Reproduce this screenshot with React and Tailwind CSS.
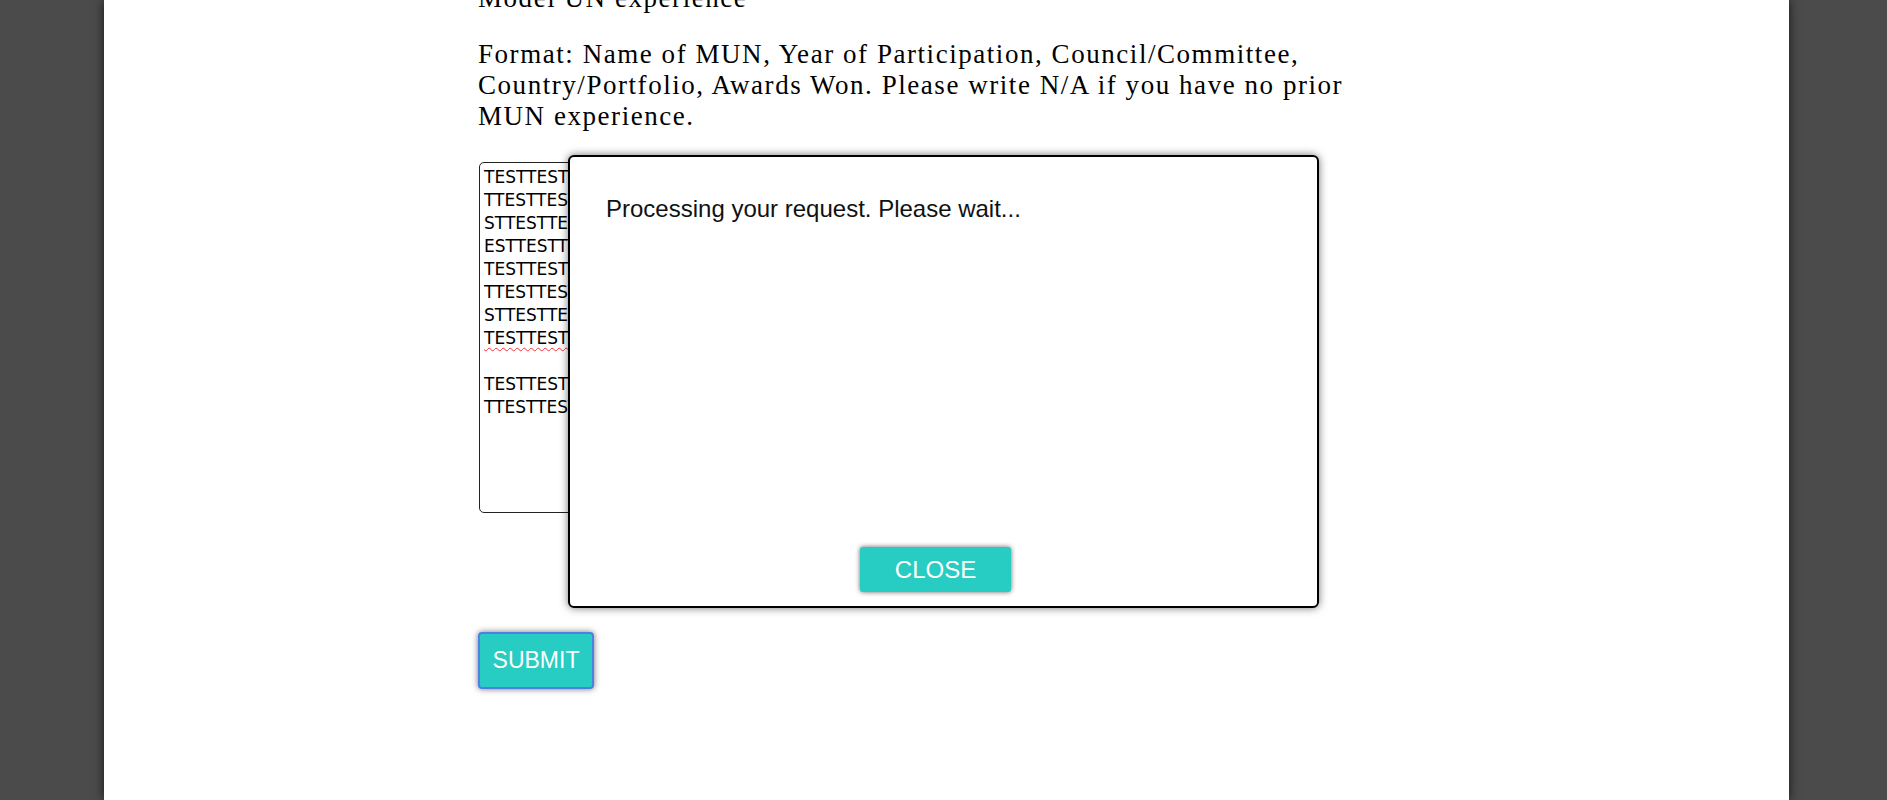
import React from 'react';

const serif = { fontFamily: '"Liberation Serif", "Times New Roman", serif' };
const sans = { fontFamily: '"Liberation Sans", Arial, sans-serif' };
const textareaFont = { fontFamily: '"DejaVu Sans", Verdana, sans-serif' };

const entryLines = [
    'TESTTESTTESTTESTTESTTESTTESTTESTTESTTEST',
    'TTESTTESTTESTTESTTESTTESTTESTTESTTESTTES',
    'STTESTTESTTESTTESTTESTTESTTESTTESTTESTTE',
    'ESTTESTTESTTESTTESTTESTTESTTESTTESTTESTT',
    'TESTTESTTESTTESTTESTTESTTESTTESTTESTTEST',
    'TTESTTESTTESTTESTTESTTESTTESTTESTTESTTES',
    'STTESTTESTTESTTESTTESTTESTTESTTESTTESTTE',
    'TESTTEST',
    '',
    'TESTTESTTESTTESTTESTTESTTESTTESTTESTTEST',
    'TTESTTESTTESTTESTTESTTESTTESTTESTTESTTES'
];

function ProcessingModal() {
    return (
        <div className="absolute left-[464px] top-[155px] w-[751px] h-[453px] bg-white border-2 border-black rounded-[6px] shadow-[0_0_8px_rgba(0,0,0,0.55)] flex flex-col">
            <p className="pl-[36px] pt-[38px] text-[24px] leading-[28px] text-[#111]" style={sans}>
                Processing your request. Please wait...
            </p>
            <div className="mt-auto mb-[14px] flex justify-center pr-[16px]">
                <button
                    className="w-[151px] h-[45px] bg-[#27ccc2] text-white text-[24px] rounded-[3px] shadow-[0_0_5px_rgba(0,0,0,0.6)]"
                    style={sans}
                >
                    CLOSE
                </button>
            </div>
        </div>
    );
}

export default function App() {
    return (
        <div className="min-h-screen h-[800px] overflow-hidden bg-[#4b4b4b] flex">
            <div className="relative ml-[104px] w-[1685px] h-full bg-white shadow-[0_0_10px_rgba(0,0,0,0.7)] overflow-hidden">
                <div className="pl-[374px]">
                    <div className="text-[27px] leading-[31px] tracking-[1.55px] text-black" style={serif}>
                        <p className="mt-[-17px]">Model UN experience</p>
                        <p className="mt-[25px] w-[880px]">
                            Format: Name of MUN, Year of Participation, Council/Committee,
                            Country/Portfolio, Awards Won. Please write N/A if you have no prior
                            MUN experience.
                        </p>
                    </div>

                    <div
                        className="mt-[30px] ml-[1px] w-[620px] h-[351px] border border-[#222] rounded-[5px] pl-[4px] pt-[3px] overflow-hidden text-[17px] leading-[23px] text-black"
                        style={textareaFont}
                    >
                        {entryLines.map((line, i) => (
                            <div key={i} className="h-[23px] whitespace-nowrap">
                                {i === 7 ? (
                                    <span className="underline decoration-wavy decoration-red-500 decoration-1 underline-offset-[3px]">
                                        {line}
                                    </span>
                                ) : (
                                    line
                                )}
                            </div>
                        ))}
                    </div>

                    <button
                        className="mt-[119px] w-[116px] h-[57px] bg-[#27ccc2] text-white text-[23px] rounded-[4px] border-2 border-[#4f7fe6] shadow-[0_0_6px_rgba(0,0,0,0.55)]"
                        style={sans}
                    >
                        SUBMIT
                    </button>
                </div>

                <ProcessingModal />
            </div>
        </div>
    );
}
